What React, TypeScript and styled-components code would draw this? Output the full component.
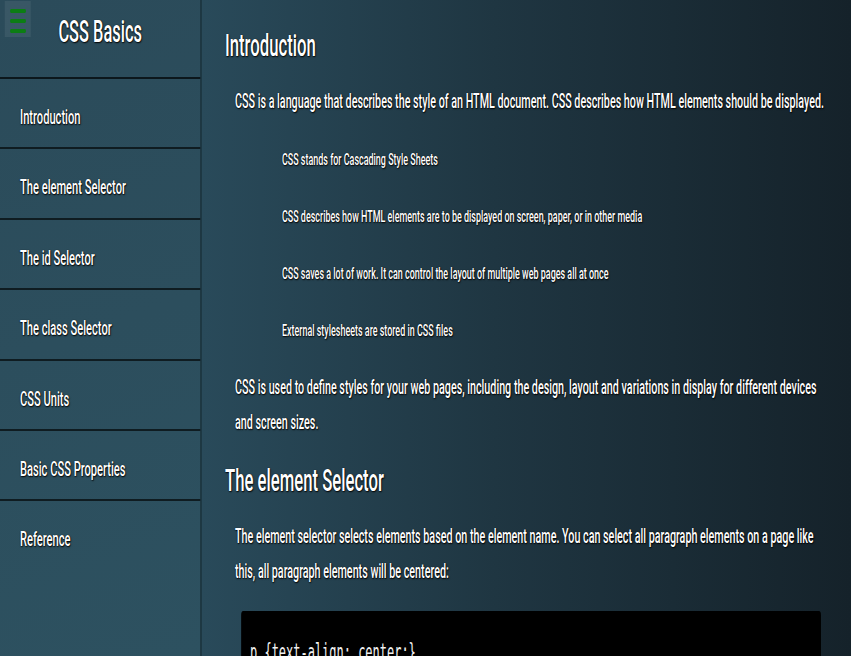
import styled, { createGlobalStyle } from "styled-components";

// the whole page is laid out wide and squeezed horizontally, like the reference
const SQUEEZE = 0.53;
const sx = (px: number) => `${(px / SQUEEZE).toFixed(1)}px`;

const GlobalStyle = createGlobalStyle`
  html, body {
    margin: 0;
    padding: 0;
    overflow: hidden;
    background: #1b2c35;
  }
  * {
    box-sizing: border-box;
  }
`;

const Stage = styled.div`
  width: calc(100vw / ${SQUEEZE});
  height: 100vh;
  display: flex;
  transform: scaleX(${SQUEEZE});
  transform-origin: left top;
  font-family: Roboto, "Liberation Sans", sans-serif;
  font-weight: 500;
  color: #fff;
  text-shadow: 1px 1px 2px #000, 0 0 1px #000;
`;

const Sidebar = styled.aside`
  flex: 0 0 ${sx(202)};
  display: flex;
  flex-direction: column;
  background: linear-gradient(170deg, #2b4b5a 0%, #2d5160 100%);
  border-right: ${sx(2)} solid #1d3843;
`;

const SidebarHeader = styled.header`
  display: grid;
  grid-template-columns: 1fr auto 1fr;
  height: 79px;
  padding-top: 1px;
  border-bottom: 2px solid #0c171c;
`;

const MenuButton = styled.button`
  justify-self: start;
  align-self: start;
  margin-left: ${sx(5)};
  width: ${sx(26)};
  height: 36px;
  padding: 8px 0 0;
  border: none;
  background: rgba(255, 255, 255, 0.07);
  display: flex;
  flex-direction: column;
  align-items: center;
  gap: 6.5px;
  cursor: pointer;
`;

const MenuBar = styled.span`
  display: block;
  width: ${sx(16)};
  height: 3.5px;
  border-radius: 2px;
  background: #0c7d14;
`;

const Title = styled.h1`
  margin: 12px 0 0;
  font-size: 31px;
  line-height: 1.2;
  font-weight: 500;
  white-space: nowrap;
`;

const Nav = styled.nav`
  display: flex;
  flex-direction: column;
`;

const NavItem = styled.a`
  display: block;
  height: 70.4px;
  padding: 26px 0 0 ${sx(20)};
  font-size: 21px;
  line-height: 1.2;
  color: #fff;
  text-decoration: none;
  border-bottom: 2px solid #0f1c21;

  &:last-child {
    border-bottom: none;
  }
`;

const Main = styled.main`
  flex: 1;
  min-width: 0;
  overflow: hidden;
  padding: 25px ${sx(21)} 0 ${sx(23)};
  background: linear-gradient(to right, #294a5a 0%, #1f3642 45%, #15222a 100%);
`;

const Heading = styled.h2`
  margin: 0;
  font-size: 31.5px;
  line-height: 42px;
  font-weight: 500;

  & + p {
    margin-top: 17px;
  }
`;

const Para = styled.p`
  margin: 0 0 0 ${sx(10)};
  font-size: 20.3px;
  line-height: 35px;
`;

const Points = styled.ul`
  list-style: none;
  margin: 12px 0 11px;
  padding: 0 0 0 ${sx(57)};
`;

const Point = styled.li`
  font-size: 16.9px;
  line-height: 57px;
`;

const Section = styled.section`
  margin-top: 20px;
`;

const CodeBlock = styled.pre`
  margin: 22px ${sx(9)} 0 ${sx(16)};
  padding: 25px ${sx(9)} 28px;
  background: #000;
  border-radius: 4px;
  font-family: "DejaVu Sans Mono", "Liberation Mono", monospace;
  font-size: 22.6px;
  font-weight: 400;
  line-height: 1.5;
  text-shadow: none;
  color: #f2f2f2;
`;

const navLinks = [
  "Introduction",
  "The element Selector",
  "The id Selector",
  "The class Selector",
  "CSS Units",
  "Basic CSS Properties",
  "Reference",
];

const introPoints = [
  "CSS stands for Cascading Style Sheets",
  "CSS describes how HTML elements are to be displayed on screen, paper, or in other media",
  "CSS saves a lot of work. It can control the layout of multiple web pages all at once",
  "External stylesheets are stored in CSS files",
];

const App: React.FC = () => {
  return (
    <>
      <GlobalStyle />
      <Stage>
        <Sidebar>
          <SidebarHeader>
            <MenuButton aria-label="menu">
              <MenuBar />
              <MenuBar />
              <MenuBar />
            </MenuButton>
            <Title>CSS Basics</Title>
          </SidebarHeader>
          <Nav>
            {navLinks.map((link) => (
              <NavItem key={link} href="#">
                {link}
              </NavItem>
            ))}
          </Nav>
        </Sidebar>
        <Main>
          <section>
            <Heading>Introduction</Heading>
            <Para>
              CSS is a language that describes the style of an HTML document. CSS describes how
              HTML elements should be displayed.
            </Para>
            <Points>
              {introPoints.map((p) => (
                <Point key={p}>{p}</Point>
              ))}
            </Points>
            <Para>
              CSS is used to define styles for your web pages, including the design, layout and
              variations in display for different devices and screen sizes.
            </Para>
          </section>
          <Section>
            <Heading>The element Selector</Heading>
            <Para>
              The element selector selects elements based on the element name. You can select all
              paragraph elements on a page like this, all paragraph elements will be centered:
            </Para>
            <CodeBlock>p {"{"}text-align: center;{"}"}</CodeBlock>
          </Section>
        </Main>
      </Stage>
    </>
  );
};

export default App;
